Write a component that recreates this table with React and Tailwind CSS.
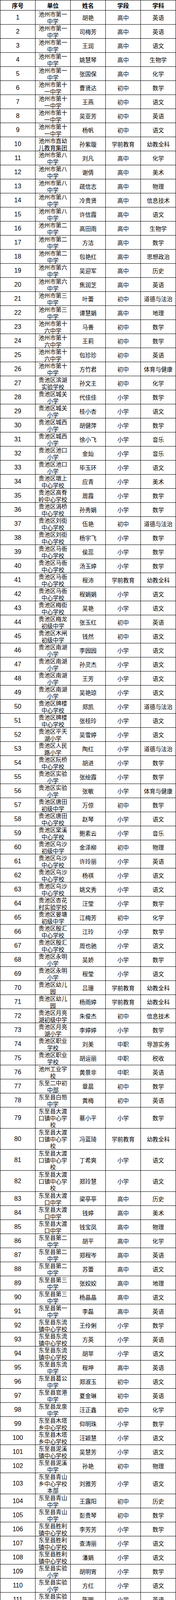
const raw = [
"池州市第一中学|胡艳|高中|英语",
"池州市第一中学|司梅芳|高中|英语",
"池州市第一中学|王润|高中|语文",
"池州市第一中学|姚慧琴|高中|生物学",
"池州市第一中学|张国保|高中|化学",
"池州市第十一中学|曹贤达|初中|数学",
"池州市第十一中学|王燕|初中|语文",
"池州市第十一中学|吴亚芳|初中|英语",
"池州市第十一中学|杨帆|初中|语文",
"池州市直幼儿教育集团|孙紫璇|学前教育|幼教全科",
"池州市第八中学|刘凡|高中|化学",
"池州市第八中学|谢倩|高中|美术",
"池州市第八中学|疏信志|高中|物理",
"池州市第八中学|冷贵贤|高中|信息技术",
"池州市第八中学|许信霞|高中|语文",
"池州市第二中学|高田雨|高中|生物学",
"池州市第二中学|方洁|高中|数学",
"池州市第二中学|包艳红|高中|思想政治",
"池州市第六中学|吴迎军|高中|历史",
"池州市第六中学|焦润芝|高中|英语",
"池州市第三中学|叶蕾|初中|道德与法治",
"池州市第三中学|谭慧娟|高中|地理",
"池州市第十六中学|马善|初中|数学",
"池州市第十六中学|王莉|初中|数学",
"池州市第十六中学|包珍珍|初中|英语",
"池州市第十中学|方竹君|初中|体育与健康",
"贵池区滨湖实验学校|孙文主|初中|化学",
"贵池区城关小学|代佳佳|小学|数学",
"贵池区城关小学|桂小杏|小学|语文",
"贵池区城西小学|胡健萍|小学|数学",
"贵池区城西小学|徐小飞|小学|音乐",
"贵池区池口小学|金灿|小学|音乐",
"贵池区池口小学|毕玉环|小学|语文",
"贵池区墩上中心学校|应青|小学|美术",
"贵池区高脊岭中心学校|周霞|小学|数学",
"贵池区涓桥中心学校|孙秀娟|小学|数学",
"贵池区刘街中心学校|伍艳|初中|道德与法治",
"贵池区刘街中心学校|杨宇飞|小学|数学",
"贵池区马衙中心学校|侯蕊|小学|数学",
"贵池区马衙中心学校|汤玉婷|小学|数学",
"贵池区马衙中心学校|程沛|学前教育|幼教全科",
"贵池区马衙中心学校|程娟娟|小学|语文",
"贵池区梅街中心学校|吴艳|小学|语文",
"贵池区梅龙初级中学|张玉红|初中|英语",
"贵池区木闸初级中学|钱然|初中|语文",
"贵池区南湖小学|李园园|小学|语文",
"贵池区南湖小学|孙灵杰|小学|语文",
"贵池区南湖小学|王芳|小学|语文",
"贵池区南湖小学|吴艳琼|小学|语文",
"贵池区牌楼中心学校|郑凯|小学|道德与法治",
"贵池区牌楼中心学校|张桂玲|小学|语文",
"贵池区平天湖小学|吴雪婷|小学|语文",
"贵池区人民路小学|陶红|小学|道德与法治",
"贵池区阮桥中心学校|胡进|小学|数学",
"贵池区实验小学|张绘霞|小学|数学",
"贵池区实验小学|张敏|小学|体育与健康",
"贵池区唐田初级中学|万倞|初中|数学",
"贵池区唐田中心学校|赵琴|小学|语文",
"贵池区棠溪中心学校|鲍素云|小学|音乐",
"贵池区乌沙初级中学|金泽柳|初中|物理",
"贵池区乌沙中心学校|许玲丽|小学|英语",
"贵池区乌沙中心学校|杨祺|小学|语文",
"贵池区乌沙中心学校|姚文秀|小学|语文",
"贵池区杏花村实验学校|汪莹|小学|数学",
"贵池区晏塘初级中学|江梅芳|初中|化学",
"贵池区殷汇中心学校|江玲|小学|数学",
"贵池区殷汇中心学校|周也驰|小学|语文",
"贵池区永明小学|吴娇|小学|数学",
"贵池区永明小学|程莹|小学|语文",
"贵池区幼儿园|吕珊|学前教育|幼教全科",
"贵池区幼儿园|杨雨婷|学前教育|幼教全科",
"贵池区月亮湖初级中学|朱俊杰|初中|信息技术",
"贵池区月亮湖小学|李婷婷|小学|数学",
"贵池区职业学校|刘美|中职|导游实务",
"贵池区职业学校|胡运丽|中职|税收",
"池州工业学校|黄景非|中职|英语",
"东至二中初中部|章晨|初中|数学",
"东至县白笏中学|黄梅|初中|英语",
"东至县大渡口镇中心学校|蔡小平|小学|数学",
"东至县大渡口镇中心学校|冯蓝琦|学前教育|幼教全科",
"东至县大渡口镇中心学校|丁希爽|小学|语文",
"东至县大渡口镇中心学校|郑玲慧|小学|语文",
"东至县大渡口中学|梁亭亭|高中|历史",
"东至县大渡口中学|钱婷|高中|美术",
"东至县大渡口中学|钱宝凤|高中|物理",
"东至县第二中学|胡平|高中|化学",
"东至县第二中学|郑程岑|高中|英语",
"东至县第二中学|苏蕾|高中|语文",
"东至县第三中学|张姣姣|高中|地理",
"东至县第三中学|杨晶晶|高中|语文",
"东至县第一中学|李磊|高中|英语",
"东至县东流镇中心学校|王伶俐|小学|数学",
"东至县东流镇中心学校|方英|小学|英语",
"东至县东流镇中心学校|胡苹|小学|语文",
"东至县东流中学|程坤|高中|英语",
"东至县葛公中学|郑淑玉|初中|语文",
"东至县官港中学|夏金琳|初中|英语",
"东至县龙泉中学|汪正鑫|初中|化学",
"东至县木塔乡中心学校|仰明珠|小学|数学",
"东至县木塔乡中心学校|汪颖慧|小学|语文",
"东至县泥溪镇中心学校|吴慧芳|小学|语文",
"东至县泥溪中学|孙艳|初中|物理",
"东至县青山乡中心学校本部|刘雅芳|小学|语文",
"东至县青山中学|王露阳|初中|历史",
"东至县青山中学|彭贵琴|初中|数学",
"东至县胜利镇中心学校|李芳芳|小学|数学",
"东至县胜利镇中心学校|查涛丽|小学|语文",
"东至县胜利镇中心学校|潘娟|小学|语文",
"东至县实验小学|胡明宵|小学|数学",
"东至县实验小学|方红|小学|语文",
"东至县实验小学|陈圆|小学|英语",
"东至县特殊教育学校|王锐|小学|特教数学",
"东至县瓦垅中学|凌艳|初中|语文",
"东至县西湾中心学校|李敏|初中|英语",
"东至县香隅镇中心学校|马茜|小学|数学",
"东至县张溪镇中心学校|施玉萍|小学|数学",
"东至县张溪镇中心学校|徐啸|小学|英语",
"东至县张溪镇中心学校|汪丹丹|学前教育|幼教全科",
"东至县张溪镇中心学校|王荧|小学|语文",
"东至县昭潭中心学校|陈丹丹|小学|数学",
"东至县直属机关幼儿园|程小洁|学前教育|幼教全科",
"东至县直属机关幼儿园|章婷婷|学前教育|幼教全科",
"东至县至德小学|吴永丽|小学|数学",
"东至县至德小学|曹小玲|小学|音乐",
"东至县至德小学|程桂芳|小学|语文",
"安徽省石台中学|刘生文|高中|化学",
"安徽省石台中学|张琛|高中|英语",
"石台县大演中心学校|王琼|初中|英语",
"石台县第二中学|王晓琴|初中|英语",
"石台县第二中学|叶海霞|初中|语文",
"石台县七都中心学校|夏明惠|小学|音乐",
"石台县七里中心学校|李欣|小学|科学",
"石台县七里中心学校|刘琼|小学|数学",
"石台县七里中心学校|叶曼|小学|语文",
"石台县实验小学|王琳|小学|数学",
"安徽省青阳中学|朱冬芳|高中|生物学",
"安徽省青阳中学|汪孝|高中|数学",
"安徽省青阳中学|张旭东|高中|物理",
"安徽省青阳中学|周林林|高中|英语",
"池州市旅游学校|张玲玲|中职|语文",
"池州市旅游学校|朱亚运|中职|美术",
"青阳县第三中学|王亭|初中|生物学",
"青阳县第三中学|金姝|初中|物理",
"青阳县第八幼儿园|陈丹红|学前教育|幼教全科",
"青阳县第六中学|朱婷婷|初中|地理",
"青阳县第三小学|杨燕|小学|数学",
"青阳县第四中学|许佳美|初中|体育与健康",
"青阳县第四中学|胡静怡|初中|英语",
"青阳县第四中学|左勇侠|初中|语文",
"青阳县杜村初中|沈沪静|初中|语文",
"青阳县陵阳初级中学|方琳|初中|英语",
"青阳县陵阳镇中心小学|陶婷婷|小学|语文",
"青阳县庙前镇幼儿园|宁媛|学前教育|幼教全科",
"青阳县木镇学校|徐佩瑶|初中|数学",
"青阳县木镇学校|杨彦|小学|数学",
"青阳县乔木乡中心小学|陶染丹|小学|道德与法治",
"青阳县蓉城镇第二小学|郑芹芹|小学|体育与健康",
"青阳县蓉城镇第二小学|吴姗姗|小学|音乐",
"青阳县蓉城镇第一小学|胡学锋|小学|语文",
"青阳县实验小学|韩艺芬|小学|英语",
"青阳县实验小学|张军|小学|语文",
"青阳县新河镇中心小学|杜慧|小学|语文",
"青阳县杨田镇中心小学|宁静|小学|数学",
"青阳县杨田镇中心小学|何玉志|小学|英语",
"青阳县幼儿园|曹田华|学前教育|幼教全科",
"青阳县第一中学|刘涓|高中|地理",
"青阳县第一中学|宁滢|高中|心理健康",
"青阳县第一中学|章猛|高中|语文",
"九华山风景区九华新区中心幼儿园|朱白云|学前教育|幼教全科",
"九华山九华乡拥华小学|何大同|小学|语文",
];

const data = raw.map((l) => l.split("|"));

const ROW_SHORT =
  "flex h-[36px] border-b border-black text-[14.67px] leading-[17.5px] font-['Noto_Sans_CJK_SC',sans-serif]";
const ROW_TALL =
  "flex h-[54px] border-b border-black text-[14.67px] leading-[17.5px] font-['Noto_Sans_CJK_SC',sans-serif]";
const HEAD =
  "flex h-[26px] border-b border-black text-[15px] leading-[18px] font-bold font-['Noto_Sans_CJK_SC',sans-serif]";
const CELL =
  "w-[90px] shrink-0 border-r border-black flex items-center justify-center text-center px-[4px]";
const NUM =
  "w-[90px] shrink-0 border-r border-black flex items-center justify-center text-center px-[4px] text-[16px] font-['Liberation_Sans_Narrow','Liberation_Sans',sans-serif]";

function Row({ index, r }) {
  const tall = r[0].length > 10;
  return (
    <div className={tall ? ROW_TALL : ROW_SHORT}>
      <div className={NUM}>{index}</div>
      <div className={CELL}>{r[0]}</div>
      <div className={CELL}>{r[1]}</div>
      <div className={CELL}>{r[2]}</div>
      <div className={CELL}>{r[3]}</div>
    </div>
  );
}

export default function App() {
  return (
    <div className="w-[451px] bg-white text-black border-l border-t border-black">
      <div className={HEAD}>
        <div className={CELL}>序号</div>
        <div className={CELL}>单位</div>
        <div className={CELL}>姓名</div>
        <div className={CELL}>学段</div>
        <div className={CELL}>学科</div>
      </div>
      {data.map((r, i) => (
        <Row key={i} index={i + 1} r={r} />
      ))}
    </div>
  );
}
